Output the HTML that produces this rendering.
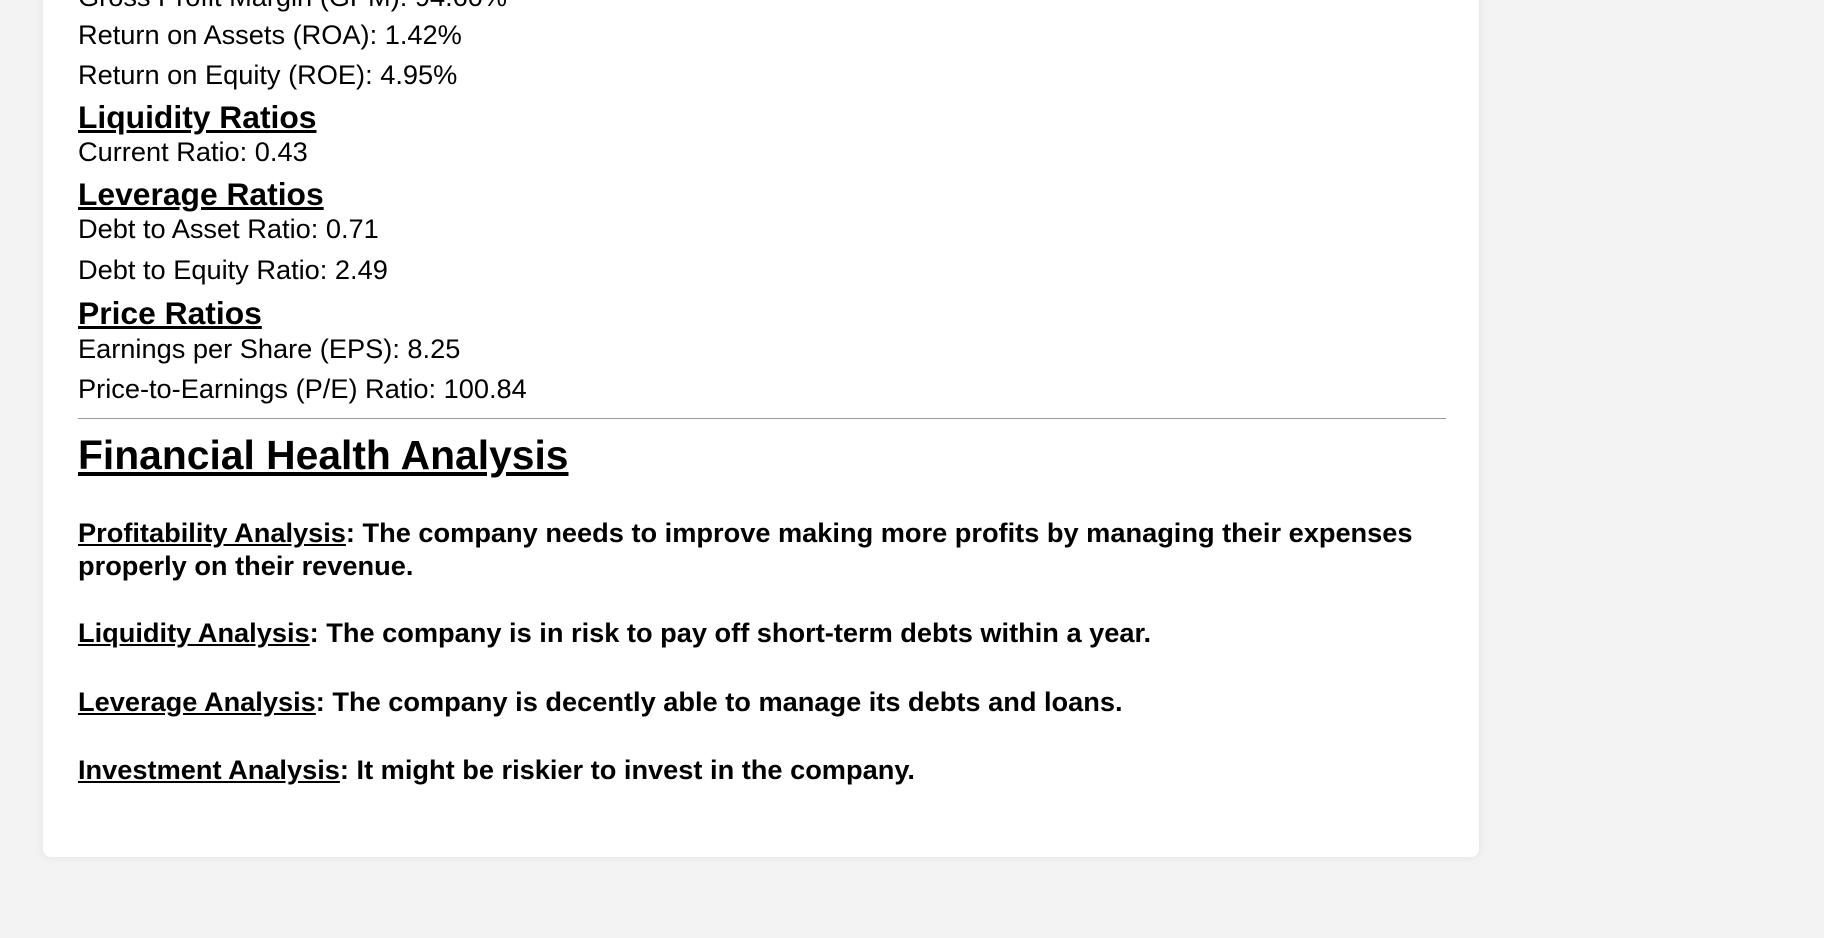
<!DOCTYPE html>
<html><head><meta charset="utf-8"><style>
html,body{margin:0;padding:0;width:1824px;height:938px;overflow:hidden;background:#f3f3f3;font-family:"Liberation Sans",Arial,sans-serif;color:#000}
.card{position:absolute;left:43px;top:-20px;width:1436px;height:877px;background:#fff;border-radius:8px;box-shadow:0 0 10px rgba(0,0,0,0.08)}
.t{position:absolute;left:78px;white-space:nowrap;font-size:27.2px;line-height:31px}
.h{font-weight:bold;text-decoration:underline;font-size:31.8px;line-height:36px}
.b{font-weight:bold}
u{text-decoration:underline}
hr{position:absolute;left:78px;top:418px;width:1368px;margin:0;border:0;border-top:1px solid #999}
</style></head><body>
<div class="card"></div>
<div class="t" style="top:-19px">Gross Profit Margin (GPM): 94.60%</div>
<div class="t" style="top:19px">Return on Assets (ROA): 1.42%</div>
<div class="t" style="top:59px">Return on Equity (ROE): 4.95%</div>
<div class="t h" style="top:99px">Liquidity Ratios</div>
<div class="t" style="top:136px">Current Ratio: 0.43</div>
<div class="t h" style="top:176px">Leverage Ratios</div>
<div class="t" style="top:213px">Debt to Asset Ratio: 0.71</div>
<div class="t" style="top:254px">Debt to Equity Ratio: 2.49</div>
<div class="t h" style="top:295px">Price Ratios</div>
<div class="t" style="top:333px">Earnings per Share (EPS): 8.25</div>
<div class="t" style="top:373px">Price-to-Earnings (P/E) Ratio: 100.84</div>
<hr>
<div class="t" style="top:432px;font-size:40.8px;line-height:47px;font-weight:bold;text-decoration:underline">Financial Health Analysis</div>
<div class="t b" style="top:517px;line-height:32.5px"><u>Profitability Analysis</u>: The company needs to improve making more profits by managing their expenses<br>properly on their revenue.</div>
<div class="t b" style="top:617px"><u>Liquidity Analysis</u>: The company is in risk to pay off short-term debts within a year.</div>
<div class="t b" style="top:686px"><u>Leverage Analysis</u>: The company is decently able to manage its debts and loans.</div>
<div class="t b" style="top:754px"><u>Investment Analysis</u>: It might be riskier to invest in the company.</div>
</body></html>
